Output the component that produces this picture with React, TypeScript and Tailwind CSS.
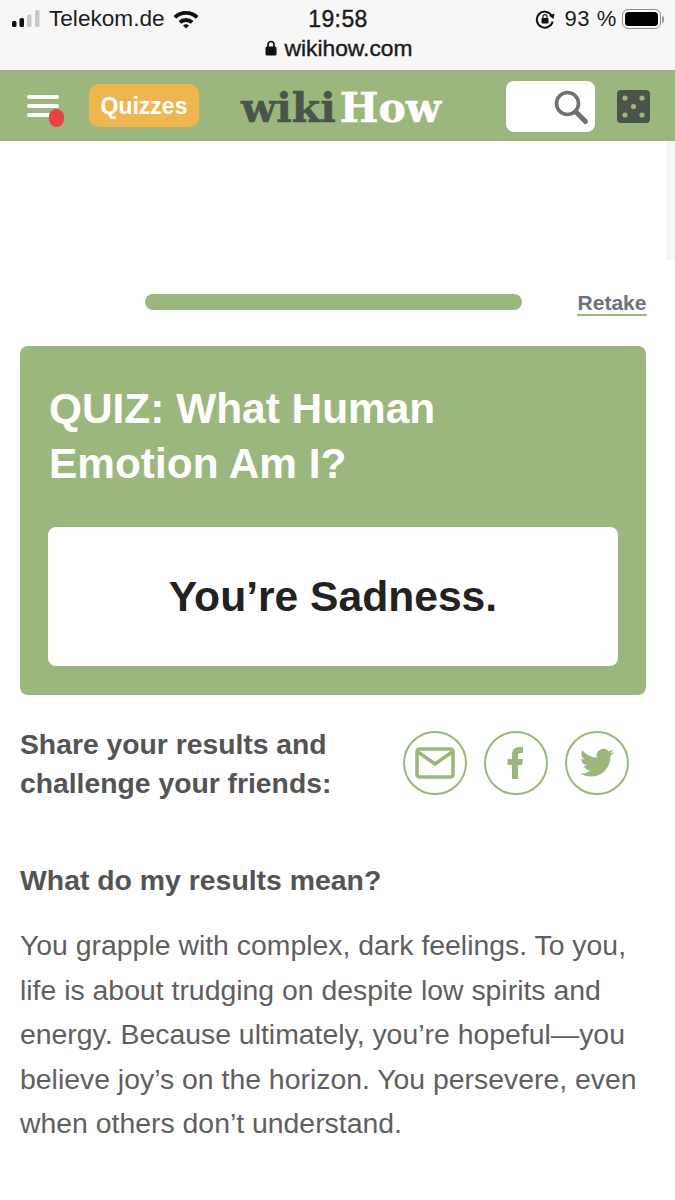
import React from "react";

const Sans = "font-['Liberation_Sans',Arial,sans-serif]";

function StatusBar() {
  return (
    <div className="h-[71px] bg-[#f7f7f7] border-b border-[#9aa78e] flex flex-col text-[#1c1c1c]">
      <div className="h-[38px] flex items-center justify-between pl-3 pr-[11px]">
        <div className="w-[260px] flex items-center">
          <svg width="30" height="18" viewBox="0 0 30 18" className="shrink-0">
            <rect x="0" y="11" width="4.5" height="6" rx="1.5" fill="#111" />
            <rect x="7.5" y="8" width="4.5" height="9" rx="1.5" fill="#111" />
            <rect x="15" y="4.5" width="4.5" height="12.5" rx="1.5" fill="#c8c8c8" />
            <rect x="23" y="0" width="4.5" height="17" rx="1.5" fill="#c8c8c8" />
          </svg>
          <span className="ml-[7px] text-[22.6px] leading-none">Telekom.de</span>
          <svg width="28" height="20" viewBox="0 0 28 20" className="ml-[7px] shrink-0">
            <path d="M1.5 7 A18 18 0 0 1 26.5 7 L23.8 9.8 A14 14 0 0 0 4.2 9.8 Z" fill="#111" />
            <path d="M6.5 12 A11 11 0 0 1 21.5 12 L18.8 14.8 A7 7 0 0 0 9.2 14.8 Z" fill="#111" />
            <path d="M11 16.6 A4.4 4.4 0 0 1 17 16.6 L14 19.6 Z" fill="#111" />
          </svg>
        </div>
        <span className="text-[23px] leading-none tracking-[0.4px] [-webkit-text-stroke:0.4px_#1c1c1c]">19:58</span>
        <div className="w-[260px] flex items-center justify-end">
          <svg width="20" height="20" viewBox="0 0 20 20" className="shrink-0">
            <path d="M16.5 6.2 A8 8 0 1 0 17.6 12.5" fill="none" stroke="#111" strokeWidth="2" />
            <path d="M14 6.5 L19.5 4.5 L18.5 10 Z" fill="#111" />
            <rect x="6.5" y="9" width="7" height="5.5" rx="1" fill="#111" />
            <path d="M8 9 V7.6 a2 2 0 0 1 4 0 V9" fill="none" stroke="#111" strokeWidth="1.2" />
          </svg>
          <span className="ml-[9px] text-[22px] leading-none tracking-[0.6px]">93 %</span>
          <div className="ml-[5px] w-[39px] h-[20px] rounded-[6px] border border-[#8e8e8e] p-[2px] shrink-0">
            <div className="w-full h-full rounded-[3.5px] bg-black" />
          </div>
          <div className="ml-[1px] w-[2px] h-[7px] rounded-r bg-[#9a9a9a]" />
        </div>
      </div>
      <div className="flex items-center justify-center gap-[8px] h-[20px] pl-[2px]">
        <svg width="12" height="16" viewBox="0 0 12 16">
          <path d="M3 7 V4.5 a3 3 0 0 1 6 0 V7" fill="none" stroke="#111" strokeWidth="1.7" />
          <rect x="0.5" y="6.5" width="11" height="9" rx="1.5" fill="#111" />
        </svg>
        <span className="text-[22.8px] leading-none [-webkit-text-stroke:0.4px_#1c1c1c]">wikihow.com</span>
      </div>
    </div>
  );
}

function Header() {
  return (
    <div className="h-[70px] bg-[#9cb77e] flex items-center">
      <div className="relative ml-[27px] w-[32px] h-[22px] flex flex-col justify-between shrink-0 self-start mt-[24px]">
        <div className="h-[4px] rounded bg-white" />
        <div className="h-[4px] rounded bg-white" />
        <div className="h-[4px] rounded bg-white" />
        <div className="absolute left-[22px] top-[14px] w-[15px] h-[18px] rounded-full bg-[#e8443f]" />
      </div>
      <div className="ml-[30px] w-[110px] h-[43px] -mt-[2px] pt-[2px] rounded-[10px] bg-[#efb64f] flex items-center justify-center text-white font-bold text-[23px] leading-none shrink-0">
        Quizzes
      </div>
      <div className="ml-[40px] w-[204px] flex items-baseline justify-center font-['DejaVu_Serif',serif] font-bold text-[41px] leading-none mt-[5px] shrink-0">
        <span className="text-[#4a5548] [-webkit-text-stroke:0.5px_#4a5548]">wiki</span>
        <span className="text-white ml-[4px] [-webkit-text-stroke:0.5px_#ffffff]">How</span>
      </div>
      <div className="ml-[63px] w-[89px] h-[51px] mt-[1px] rounded-[8px] bg-white flex items-center justify-end pr-[5px] shrink-0">
        <svg width="38" height="38" viewBox="0 0 38 38">
          <circle cx="15.5" cy="15.5" r="11" fill="none" stroke="#707070" strokeWidth="3.6" />
          <path d="M23.5 23.5 L33.5 33.5" stroke="#707070" strokeWidth="5" strokeLinecap="round" />
        </svg>
      </div>
      <svg width="33" height="33" viewBox="0 0 33 33" className="ml-[22px] shrink-0">
        <rect width="33" height="33" rx="4" fill="#4a5548" />
        <circle cx="8" cy="8" r="2.6" fill="#9cb77e" />
        <circle cx="25" cy="8" r="2.6" fill="#9cb77e" />
        <circle cx="16.5" cy="16.5" r="2.6" fill="#9cb77e" />
        <circle cx="8" cy="25" r="2.6" fill="#9cb77e" />
        <circle cx="25" cy="25" r="2.6" fill="#9cb77e" />
      </svg>
    </div>
  );
}

function Round({ children }: { children: React.ReactNode }) {
  return (
    <div className="w-[64px] h-[64px] rounded-full border-2 border-[#9cb77e] flex items-center justify-center shrink-0">
      {children}
    </div>
  );
}

export default function App() {
  return (
    <div className={`relative w-[675px] h-[1200px] overflow-hidden bg-white ${Sans}`}>
      <StatusBar />
      <Header />
      <div className="absolute right-0 top-[141px] w-[9px] h-[119px] bg-[#f6f6f6]" />

      <div className="mt-[153px] h-[24px] flex items-start pl-[145px]">
        <div className="w-[377px] h-[16px] rounded-full bg-[#9cb77e]" />
        <div className="ml-[55px] w-[70px] -mt-[1px] h-[23px] border-b-2 border-[#9cb77e] text-[#6f7278] font-bold text-[21px] leading-[20px] text-center">
          Retake
        </div>
      </div>

      <div className="mt-[28px] mx-[20px] w-[626px] h-[349px] rounded-[8px] bg-[#9cb77e] pt-[35px] px-[28px]">
        <div className="text-white font-bold text-[42.4px] leading-[55px] pl-[1px]">
          QUIZ: What Human
          <br />
          Emotion Am I?
        </div>
        <div className="mt-[36px] h-[139px] rounded-[8px] bg-white flex items-center justify-center text-[#222] font-bold text-[42.6px] leading-none">
          You’re Sadness.
        </div>
      </div>

      <div className="mt-[30px] ml-[20px] flex items-start text-[#545454]">
        <div className="w-[383px] font-bold text-[28.3px] leading-[39px]">
          Share your results and
          <br />
          challenge your friends:
        </div>
        <div className="mt-[6px] flex gap-[17px]">
          <Round>
            <svg width="40" height="32" viewBox="0 0 40 32">
              <rect x="2" y="2" width="36" height="28" rx="2.5" fill="none" stroke="#9cb77e" strokeWidth="3.6" />
              <path d="M3 5 L20 17 L37 5" fill="none" stroke="#9cb77e" strokeWidth="3.6" />
            </svg>
          </Round>
          <Round>
            <svg width="18" height="32" viewBox="0 0 18 32">
              <path
                d="M5 32 V18 H0.5 V12 H5 V8 C5 3 7.5 0 12.5 0 H16 V6 H13.5 C11.5 6 11 7 11 8.5 V12 H16 L15.2 18 H11 V32 Z"
                fill="#9cb77e"
              />
            </svg>
          </Round>
          <Round>
            <svg width="34" height="30" viewBox="0 0 24 20">
              <path
                d="M23.95 2.4a9.8 9.8 0 0 1-2.82.77 4.93 4.93 0 0 0 2.16-2.72 9.86 9.86 0 0 1-3.12 1.19 4.92 4.92 0 0 0-8.38 4.48A13.96 13.96 0 0 1 1.64.98a4.92 4.92 0 0 0 1.52 6.57 4.9 4.9 0 0 1-2.23-.61v.06a4.92 4.92 0 0 0 3.95 4.83 4.9 4.9 0 0 1-2.22.08 4.93 4.93 0 0 0 4.6 3.42A9.88 9.88 0 0 1 0 17.37 13.94 13.94 0 0 0 7.55 19.6c9.06 0 14.01-7.5 14.01-14.01l-.02-.64a10 10 0 0 0 2.41-2.55z"
                fill="#9cb77e"
              />
            </svg>
          </Round>
        </div>
      </div>

      <div className="mt-[58px] ml-[20px] font-bold text-[28.4px] leading-[39px] text-[#545454]">
        What do my results mean?
      </div>
      <div className="mt-[23px] ml-[20px] w-[640px] text-[28.4px] leading-[44.5px] text-[#5f5f5f]">
        You grapple with complex, dark feelings. To you,
        <br />
        life is about trudging on despite low spirits and
        <br />
        energy. Because ultimately, you’re hopeful—you
        <br />
        believe joy’s on the horizon. You persevere, even
        <br />
        when others don’t understand.
      </div>
    </div>
  );
}
